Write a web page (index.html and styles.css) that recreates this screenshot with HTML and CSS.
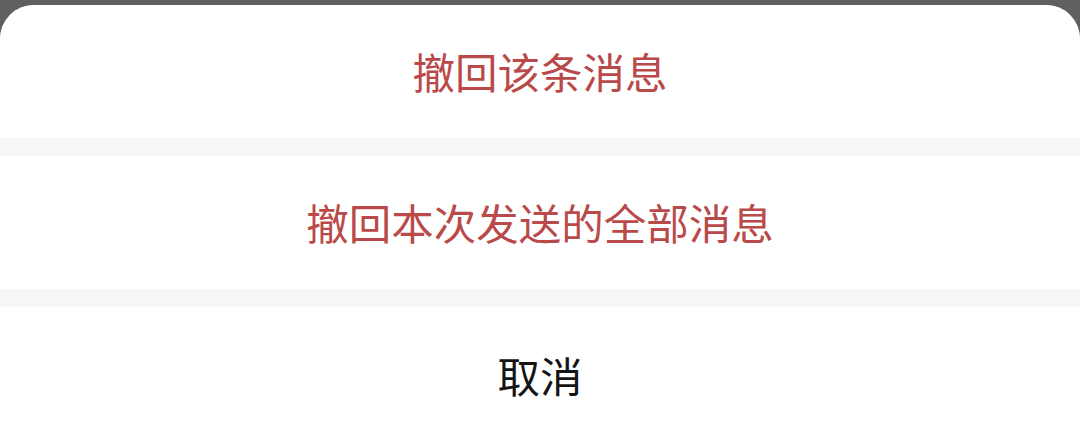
FILE: index.html
```html
<!DOCTYPE html>
<html lang="zh-CN">
<head>
<meta charset="utf-8">
<link rel="stylesheet" href="styles.css">
</head>
<body>
<div class="sheet">
  <div class="item danger">撤回该条消息</div>
  <div class="item danger">撤回本次发送的全部消息</div>
  <div class="item cancel">取消</div>
</div>
</body>
</html>
```
FILE: styles.css
```css
html, body {
  margin: 0;
  padding: 0;
  height: 100%;
  background: #606060;
  overflow: hidden;
}
.sheet {
  margin-top: 5px;
  background: #f6f6f6;
  border-radius: 34px 34px 0 0;
  overflow: hidden;
  display: flex;
  flex-direction: column;
  gap: 18px;
  height: calc(100% - 5px);
  font-family: "Noto Sans CJK SC", "Noto Sans", sans-serif;
  font-size: 42.5px;
}
.item {
  background: #ffffff;
  height: 133px;
  display: flex;
  align-items: center;
  justify-content: center;
  line-height: 1;
  flex-shrink: 0;
}
.danger {
  color: #ba4a4a;
}
.cancel {
  color: #141414;
  flex: 1;
  height: auto;
  padding-top: 22px;
  box-sizing: border-box;
}
```
